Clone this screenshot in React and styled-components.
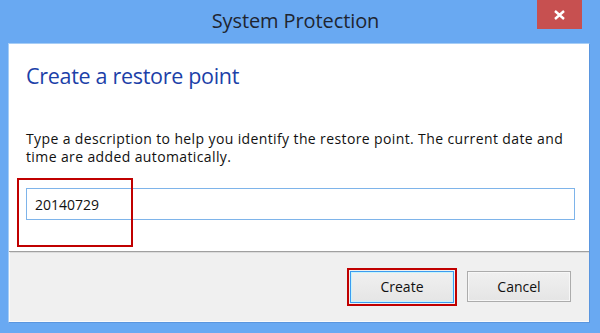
import React from 'react'
import styled, { createGlobalStyle } from 'styled-components'

const GlobalStyle = createGlobalStyle`
    html, body {
        margin: 0;
        padding: 0;
        background: #69a9f2;
    }
    body {
        font-family: 'Open Sans', 'Noto Sans', sans-serif;
    }
`

const Window = styled.div`
    width: 600px;
    height: 333px;
    box-sizing: border-box;
    background: #69a9f2;
    padding: 0 10px 10px 8px;
    display: flex;
    flex-direction: column;
`

const TitleBar = styled.div`
    height: 43px;
    flex-shrink: 0;
    display: grid;
    grid-template-columns: 1fr auto 1fr;
    margin: 0 -1px 0 -8px;
    padding: 0 9px;
`

const Title = styled.h1`
    grid-column: 2;
    margin: 0;
    padding-top: 7px;
    font-size: 20px;
    font-weight: 400;
    color: #1f2530;
    letter-spacing: -0.1px;
`

const CloseButton = styled.button`
    grid-column: 3;
    justify-self: end;
    align-self: start;
    width: 45px;
    height: 29px;
    border: none;
    background: #c75050;
    color: white;
    display: flex;
    align-items: center;
    justify-content: center;
    padding: 0;
`

const Client = styled.div`
    flex: 1;
    display: flex;
    flex-direction: column;
    background: white;
    border: 1px solid #a6cdf6;
    border-bottom-color: #5a96df;
    border-right-color: #5a96df;
`

const Content = styled.div`
    flex: 1;
    padding: 17px 14px 0 17px;
    display: flex;
    flex-direction: column;
`

const Heading = styled.h2`
    margin: 0;
    font-size: 21.5px;
    font-weight: 400;
    color: #1c3fa8;
    letter-spacing: -0.3px;
    line-height: 30px;
`

const Description = styled.p`
    margin: 39px 0 0;
    font-size: 14px;
    line-height: 17.5px;
    color: #111;
    letter-spacing: 0.38px;
`

const FieldArea = styled.div`
    position: relative;
    margin-top: 23px;
`

const TextBox = styled.input`
    display: block;
    width: 100%;
    height: 32px;
    box-sizing: border-box;
    border: 1px solid #7eb4ea;
    padding: 0 8px;
    font-family: inherit;
    font-size: 14px;
    color: #111;
    outline: none;
    background: white;
`

const Annotation = styled.div`
    position: absolute;
    left: -9px;
    top: -10px;
    width: 116px;
    height: 69px;
    box-sizing: border-box;
    border: 2px solid #c00000;
    pointer-events: none;
`

const Footer = styled.div`
    height: 69px;
    background: #f0f0f0;
    border-top: 1px solid #a0a0a0;
    box-shadow: inset 1px 0 0 #fafafa, inset 0 -1px 0 #fafafa, inset 0 1px 0 #dcdcdc;
    display: flex;
    align-items: center;
    justify-content: flex-end;
    gap: 10px;
    padding: 0 18px 1px 0;
`

const Highlight = styled.div`
    border: 2px solid #c00000;
    padding: 1px;
    display: flex;
`

const Button = styled.button`
    width: 104px;
    height: ${(props) => (props.primary ? '32px' : '31px')};
    box-sizing: border-box;
    font-family: inherit;
    font-size: 14px;
    color: #111;
    padding: 0;
    border: 1px solid ${(props) => (props.primary ? '#3c9cf0' : '#acacac')};
    background: linear-gradient(#f0f0f0, #e5e5e5);
    box-shadow: ${(props) =>
        props.primary ? 'inset 0 0 0 1px #c8f4fc' : 'inset 0 0 0 1px #f7f7f7'};
`

const App = () => {
    return (
        <>
            <GlobalStyle />
            <Window>
                <TitleBar>
                    <Title>System Protection</Title>
                    <CloseButton aria-label="Close">
                        <svg width="11" height="10" viewBox="0 0 11 10">
                            <path
                                d="M1 1 L10 9 M10 1 L1 9"
                                stroke="white"
                                strokeWidth="2.4"
                            />
                        </svg>
                    </CloseButton>
                </TitleBar>
                <Client>
                    <Content>
                        <Heading>Create a restore point</Heading>
                        <Description>
                            Type a description to help you identify the restore point. The current date and time are added automatically.
                        </Description>
                        <FieldArea>
                            <TextBox defaultValue="20140729" />
                            <Annotation />
                        </FieldArea>
                    </Content>
                    <Footer>
                        <Highlight>
                            <Button primary>Create</Button>
                        </Highlight>
                        <Button>Cancel</Button>
                    </Footer>
                </Client>
            </Window>
        </>
    )
}

export default App
